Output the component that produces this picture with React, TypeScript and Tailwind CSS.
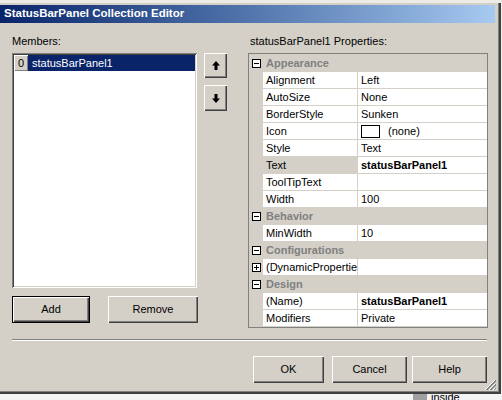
import React from "react";

type Row =
  | { kind: "cat"; name: string; open: boolean }
  | { kind: "prop"; name: string; value: string; bold?: boolean; selected?: boolean; icon?: boolean; plus?: boolean };

const rows: Row[] = [
  { kind: "cat", name: "Appearance", open: true },
  { kind: "prop", name: "Alignment", value: "Left" },
  { kind: "prop", name: "AutoSize", value: "None" },
  { kind: "prop", name: "BorderStyle", value: "Sunken" },
  { kind: "prop", name: "Icon", value: "(none)", icon: true },
  { kind: "prop", name: "Style", value: "Text" },
  { kind: "prop", name: "Text", value: "statusBarPanel1", bold: true, selected: true },
  { kind: "prop", name: "ToolTipText", value: "" },
  { kind: "prop", name: "Width", value: "100" },
  { kind: "cat", name: "Behavior", open: true },
  { kind: "prop", name: "MinWidth", value: "10" },
  { kind: "cat", name: "Configurations", open: true },
  { kind: "prop", name: "(DynamicProperties)", value: "", plus: true },
  { kind: "cat", name: "Design", open: true },
  { kind: "prop", name: "(Name)", value: "statusBarPanel1", bold: true },
  { kind: "prop", name: "Modifiers", value: "Private" },
];

const raised =
  "bg-[#d4d0c8] shadow-[inset_1px_1px_#ffffff,inset_-1px_-1px_#404040,inset_-2px_-2px_#808080]";

function ToggleBox({ plus }: { plus?: boolean }) {
  return (
    <svg width="9" height="9" viewBox="0 0 9 9" className="block">
      <rect x="0.5" y="0.5" width="8" height="8" fill="#ffffff" stroke="#000000" strokeWidth="1" />
      <line x1="2" y1="4.5" x2="7" y2="4.5" stroke="#000000" strokeWidth="1" />
      {plus && <line x1="4.5" y1="2" x2="4.5" y2="7" stroke="#000000" strokeWidth="1" />}
    </svg>
  );
}

function Arrow({ down }: { down?: boolean }) {
  return (
    <svg width="8" height="9" viewBox="0 0 8 9" className={down ? "block rotate-180" : "block"}>
      <polygon points="4,0 8,4.5 5.5,4.5 5.5,9 2.5,9 2.5,4.5 0,4.5" fill="#000000" />
    </svg>
  );
}

function Btn({ label, w, def }: { label: string; w: string; def?: boolean }) {
  return (
    <div
      className={
        w +
        " h-[27px] flex items-center justify-center text-[11px] text-black " +
        (def
          ? "bg-[#d4d0c8] border border-black shadow-[inset_1px_1px_#ffffff,inset_-1px_-1px_#404040,inset_-2px_-2px_#808080]"
          : raised)
      }
    >
      {label}
    </div>
  );
}

export default function App() {
  return (
    <div className="w-[502px] h-[400px] overflow-hidden bg-[#f4f4f4] font-['Liberation_Sans',Arial,sans-serif] text-black">
      <div className="h-[3px] bg-[#ecebe6]" />
      <div className="relative w-[501px] h-[391px] bg-[#d4d0c8] border-r-2 border-b-2 border-r-[#404040] border-b-[#404040] shadow-[inset_-1px_-1px_#808080]">
        <div className="h-[2px]" />
        {/* title bar */}
        <div className="w-[495px] h-[18px] bg-linear-to-r from-[#0a246a] to-[#a6caf0] flex items-center pl-[4px]">
          <span className="text-white font-bold text-[11.5px] leading-none">StatusBarPanel Collection Editor</span>
        </div>

        {/* body */}
        <div className="flex pl-[12px] mt-[12px]">
          {/* left column */}
          <div className="flex flex-col w-[215px]">
            <div className="h-[13px] text-[11px] leading-[13px]">Members:</div>
            <div className="flex mt-[5px]">
              <div className="w-[185px] h-[235px] bg-white shadow-[inset_1px_1px_#808080,inset_-1px_-1px_#ffffff,inset_2px_2px_#404040,inset_-2px_-2px_#d4d0c8] p-[2px]">
                <div className="flex h-[16px]">
                  <div className="w-[14px] h-[16px] bg-[#d4d0c8] shadow-[inset_1px_1px_#ffffff,inset_-1px_-1px_#808080] flex items-center justify-center text-[11px]">
                    0
                  </div>
                  <div className="flex-1 bg-[#0a246a] text-white text-[11px] leading-[16px] pl-[4px]">statusBarPanel1</div>
                </div>
              </div>
              <div className="flex flex-col ml-[7px] gap-[7px]">
                <div className={"w-[23px] h-[25px] flex items-center justify-center " + raised}>
                  <Arrow />
                </div>
                <div className={"w-[23px] h-[26px] flex items-center justify-center " + raised}>
                  <Arrow down />
                </div>
              </div>
            </div>
            <div className="flex mt-[8px] gap-[18px]">
              <Btn label="Add" w="w-[78px]" def />
              <Btn label="Remove" w="w-[90px]" />
            </div>
          </div>

          {/* right column */}
          <div className="flex flex-col ml-[21px] w-[240px]">
            <div className="h-[13px] text-[11px] leading-[13px] pl-[2px]">statusBarPanel1 Properties:</div>
            <div className="mt-[5px] w-[240px] h-[275px] border border-[#808080] bg-[#d4d0c8] flex flex-col">
              <div className="h-[1px]" />
              {rows.map((r, i) =>
                r.kind === "cat" ? (
                  <div key={i} className="flex h-[17px]">
                    <div className="w-[14px] flex items-center justify-center">
                      <ToggleBox />
                    </div>
                    <div className="pl-[3px] text-[11px] font-bold text-[#808080] leading-[17px]">{r.name}</div>
                  </div>
                ) : (
                  <div key={i} className="flex h-[17px]">
                    <div className="w-[14px] flex items-center justify-center">
                      {r.plus && <ToggleBox plus />}
                    </div>
                    <div
                      className={
                        "w-[95px] h-[17px] border-b border-r border-[#d4d0c8] pl-[3px] text-[11px] leading-[16px] whitespace-nowrap overflow-hidden " +
                        (r.selected ? "bg-[#d4d0c8]" : "bg-white")
                      }
                    >
                      {r.name}
                    </div>
                    <div
                      className={
                        "flex-1 h-[17px] bg-white border-b border-[#d4d0c8] pl-[3px] text-[11px] leading-[16px] whitespace-nowrap flex items-center " +
                        (r.bold ? "font-bold" : "")
                      }
                    >
                      {r.icon && <div className="w-[19px] h-[13px] border border-black bg-white mr-[8px]" />}
                      {r.value}
                    </div>
                  </div>
                )
              )}
            </div>
          </div>
        </div>

        {/* separator */}
        <div className="ml-[12px] mt-[11px] w-[475px] h-[2px] border-t border-t-[#808080] border-b border-b-white" />

        {/* bottom buttons */}
        <div className="flex pl-[253px] mt-[15px]">
          <Btn label="OK" w="w-[71px]" />
          <div className="w-[8px]" />
          <Btn label="Cancel" w="w-[75px]" />
          <div className="w-[5px]" />
          <Btn label="Help" w="w-[75px]" />
        </div>

        {/* size grip */}
        <svg width="12" height="12" viewBox="0 0 12 12" className="absolute right-[3px] bottom-[1px]">
          <line x1="11" y1="1" x2="1" y2="11" stroke="#ffffff" />
          <line x1="12" y1="1" x2="2" y2="11" stroke="#808080" />
          <line x1="12" y1="2" x2="3" y2="11" stroke="#808080" />
          <line x1="11" y1="5" x2="5" y2="11" stroke="#ffffff" />
          <line x1="12" y1="5" x2="6" y2="11" stroke="#808080" />
          <line x1="12" y1="6" x2="7" y2="11" stroke="#808080" />
          <line x1="11" y1="9" x2="9" y2="11" stroke="#ffffff" />
          <line x1="12" y1="9" x2="10" y2="11" stroke="#808080" />
        </svg>
      </div>
      <div className="flex h-[6px] overflow-hidden pl-[413px]">
        <div className="w-[14px] h-[6px] bg-[#a0a0a0] mr-[4px]" />
        <div className="text-[11px] leading-[10px] -mt-[2px]">inside</div>
      </div>
    </div>
  );
}
